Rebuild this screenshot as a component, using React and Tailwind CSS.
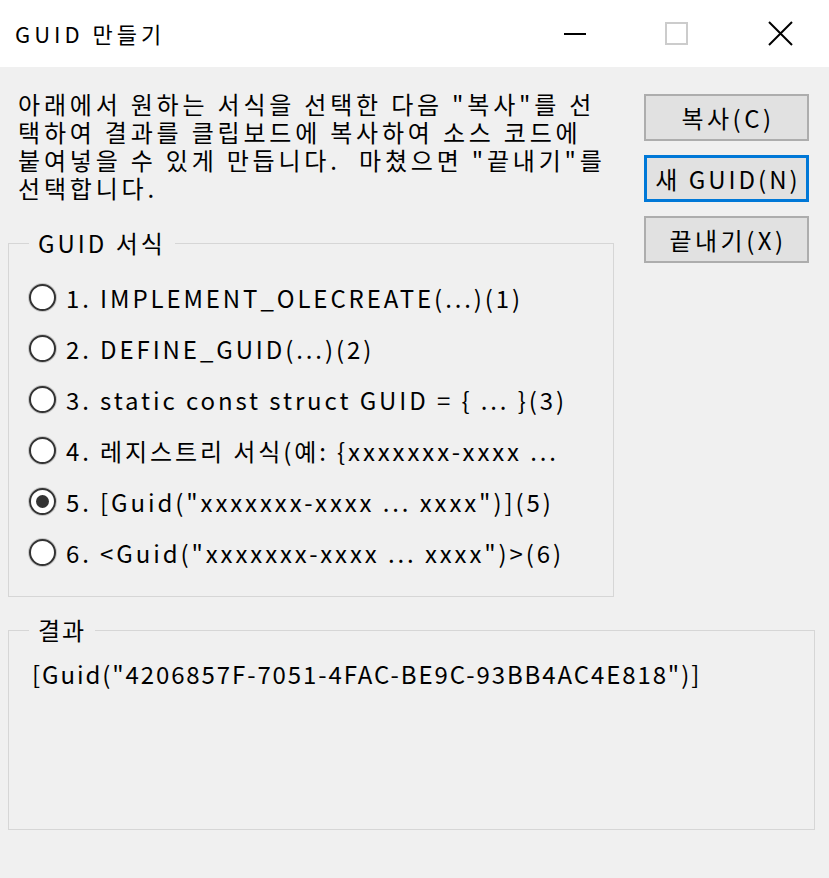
import React from 'react';

const FONT = "font-['Noto_Sans_CJK_KR','Noto_Sans',sans-serif]";

const formats = [
  '1. IMPLEMENT_OLECREATE(...)(1)',
  '2. DEFINE_GUID(...)(2)',
  '3. static const struct GUID = { ... }(3)',
  '4. 레지스트리 서식(예: {xxxxxxx-xxxx ...',
  '5. [Guid("xxxxxxx-xxxx ... xxxx")](5)',
  '6. <Guid("xxxxxxx-xxxx ... xxxx")>(6)',
];

function Radio({ checked }) {
  return (
    <span className="w-[27px] h-[27px] shrink-0 rounded-full border-2 border-[#333] bg-white flex items-center justify-center shadow-[0_0_0_1px_#c8c8c8]">
      {checked && <span className="w-[13px] h-[13px] rounded-full bg-[#333]" />}
    </span>
  );
}

function Button({ children, focused }) {
  return (
    <div
      className={
        focused
          ? 'h-[47px] flex items-center justify-center bg-[#e1e1e1] border-[3px] border-[#0078d7] text-[24px] tracking-[3px] pl-[3px]'
          : 'h-[47px] flex items-center justify-center bg-[#e1e1e1] border-2 border-[#adadad] text-[24px] tracking-[3.5px] pl-[3px]'
      }
    >
      {children}
    </div>
  );
}

export default function App() {
  const selected = 4;

  return (
    <div className={`w-[829px] h-[878px] bg-[#f0f0f0] flex flex-col text-black ${FONT}`}>
      {/* title bar */}
      <div className="h-[67px] bg-white flex items-center pl-[15px] pr-[36px]">
        <span className="text-[22px] tracking-[4px]">GUID 만들기</span>
        <div className="ml-auto flex items-center">
          <span className="w-[22px] h-[2px] bg-black" />
          <span className="ml-[79px] w-[23px] h-[23px] border-2 border-[#cccccc]" />
          <svg className="ml-[80px]" width="25" height="25" viewBox="0 0 25 25">
            <path d="M1 1 L24 24 M24 1 L1 24" stroke="#000" strokeWidth="2" fill="none" />
          </svg>
        </div>
      </div>

      {/* body */}
      <div className="flex-1 flex flex-col">
        <div className="flex">
          <div className="ml-[8px] w-[606px]">
            <div className="pl-[10px] pt-[23px] text-[24px] leading-[28px] tracking-[3.8px] whitespace-pre">
              <div>아래에서 원하는 서식을 선택한 다음 "복사"를 선</div>
              <div>택하여 결과를 클립보드에 복사하여 소스 코드에</div>
              <div>붙여넣을 수 있게 만듭니다.  마쳤으면 "끝내기"를</div>
              <div>선택합니다.</div>
            </div>

            <div className="relative mt-[41px] h-[354px] border border-[#d6d6d6] pt-[28px] pl-[20px]">
              <span className="absolute left-[20px] -top-[16px] px-[9px] bg-[#f0f0f0] text-[24px] leading-[30px] tracking-[3px]">
                GUID 서식
              </span>
              {formats.map((f, i) => (
                <div key={i} className="h-[51px] flex items-center gap-[10px] text-[24px] whitespace-pre tracking-[2.9px]">
                  <Radio checked={i === selected} />
                  <span>{f}</span>
                </div>
              ))}
            </div>
          </div>

          <div className="ml-[30px] w-[165px] mt-[27px] flex flex-col gap-[14px]">
            <Button>복사(C)</Button>
            <Button focused>새 GUID(N)</Button>
            <Button>끝내기(X)</Button>
          </div>
        </div>

        <div className="relative ml-[8px] mt-[33px] w-[807px] h-[200px] border border-[#d6d6d6] pl-[23px] pt-[28px]">
          <span className="absolute left-[20px] -top-[16px] px-[9px] bg-[#f0f0f0] text-[24px] leading-[30px] tracking-[2px]">
            결과
          </span>
          <div className="text-[24px] leading-[30px] tracking-[1.9px]">
            [Guid("4206857F-7051-4FAC-BE9C-93BB4AC4E818")]
          </div>
        </div>
      </div>
    </div>
  );
}
